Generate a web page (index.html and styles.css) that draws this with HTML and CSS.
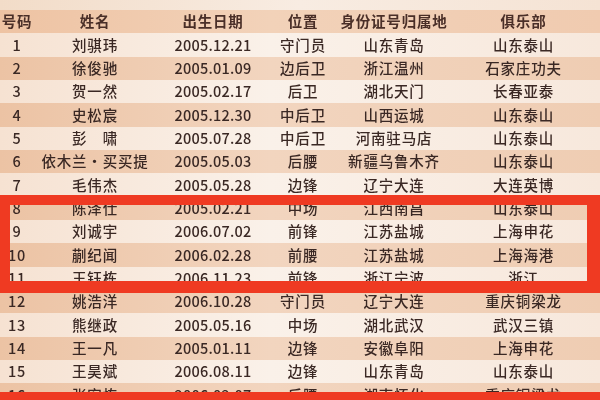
FILE: index.html
```html
<!DOCTYPE html>
<html lang="zh-CN">
<head>
<meta charset="utf-8">
<title>球员名单</title>
<link rel="stylesheet" href="styles.css">
</head>
<body>
<div class="page">
  <div class="table">
    <div class="row head"><span>号码</span><span>姓名</span><span>出生日期</span><span>位置</span><span>身份证号归属地</span><span>俱乐部</span></div>
    <div class="row light"><span>1</span><span>刘骐玮</span><span>2005.12.21</span><span>守门员</span><span>山东青岛</span><span>山东泰山</span></div>
    <div class="row dark"><span>2</span><span>徐俊驰</span><span>2005.01.09</span><span>边后卫</span><span>浙江温州</span><span>石家庄功夫</span></div>
    <div class="row light"><span>3</span><span>贺一然</span><span>2005.02.17</span><span>后卫</span><span>湖北天门</span><span>长春亚泰</span></div>
    <div class="row dark"><span>4</span><span>史松宸</span><span>2005.12.30</span><span>中后卫</span><span>山西运城</span><span>山东泰山</span></div>
    <div class="row light"><span>5</span><span>彭　啸</span><span>2005.07.28</span><span>中后卫</span><span>河南驻马店</span><span>山东泰山</span></div>
    <div class="row dark"><span>6</span><span>依木兰·买买提</span><span>2005.05.03</span><span>后腰</span><span>新疆乌鲁木齐</span><span>山东泰山</span></div>
    <div class="row light"><span>7</span><span>毛伟杰</span><span>2005.05.28</span><span>边锋</span><span>辽宁大连</span><span>大连英博</span></div>
    <div class="row dark"><span>8</span><span>陈泽仕</span><span>2005.02.21</span><span>中场</span><span>江西南昌</span><span>山东泰山</span></div>
    <div class="row light"><span>9</span><span>刘诚宇</span><span>2006.07.02</span><span>前锋</span><span>江苏盐城</span><span>上海申花</span></div>
    <div class="row dark"><span>10</span><span>蒯纪闻</span><span>2006.02.28</span><span>前腰</span><span>江苏盐城</span><span>上海海港</span></div>
    <div class="row light"><span>11</span><span>王钰栋</span><span>2006.11.23</span><span>前锋</span><span>浙江宁波</span><span>浙江</span></div>
    <div class="row dark"><span>12</span><span>姚浩洋</span><span>2006.10.28</span><span>守门员</span><span>辽宁大连</span><span>重庆铜梁龙</span></div>
    <div class="row light"><span>13</span><span>熊继政</span><span>2005.05.16</span><span>中场</span><span>湖北武汉</span><span>武汉三镇</span></div>
    <div class="row dark"><span>14</span><span>王一凡</span><span>2005.01.11</span><span>边锋</span><span>安徽阜阳</span><span>上海申花</span></div>
    <div class="row light"><span>15</span><span>王昊斌</span><span>2006.08.11</span><span>边锋</span><span>山东青岛</span><span>山东泰山</span></div>
    <div class="row dark"><span>16</span><span>张宏栋</span><span>2006.02.07</span><span>后腰</span><span>湖南怀化</span><span>重庆铜梁龙</span></div>
  </div>
  <div class="frame"></div>
  <div class="band"></div>
</div>
</body>
</html>
```

FILE: styles.css
```css
html, body {
  margin: 0;
  padding: 0;
  background: #f6e6d8;
}
.page {
  position: relative;
  width: 600px;
  height: 400px;
  overflow: hidden;
  background: linear-gradient(90deg, #f2dcc8, #f8ece2 50%, #f5e3d4);
  font-family: "Noto Sans CJK SC", "Noto Sans", sans-serif;
  font-weight: 500;
  font-size: 14.5px;
  letter-spacing: 0.8px;
  color: #3a2824;
}
.table {
  padding-top: 10px;
  filter: blur(0.35px);
}
.row {
  display: grid;
  grid-template-columns: 34px 122px 114px 66px 116px 143px;
  height: 23.33px;
  align-items: center;
  text-align: center;
  line-height: 1;
}
.row span {
  white-space: nowrap;
}
.row span:nth-child(3) {
  letter-spacing: 0.2px;
}
.head span:nth-child(3) {
  letter-spacing: 0.8px;
}
.head {
  background: linear-gradient(90deg, #eec3a3, #f2d2b9 45%, #f0cbb0);
  color: #4a2f28;
  font-weight: 700;
}
.dark {
  background: linear-gradient(90deg, #ecc3a4, #f2d5bf 45%, #efcdb3);
}
.light {
  background: linear-gradient(90deg, #f6e2d2, #faf1e9 45%, #f7e8dc);
}
.frame {
  position: absolute;
  left: 0;
  top: 195px;
  width: 600px;
  height: 98px;
  box-sizing: border-box;
  border-style: solid;
  border-color: #ef3a22;
  border-width: 10px 13px 12px 10px;
}
.band {
  position: absolute;
  left: 0;
  top: 392px;
  width: 600px;
  height: 8px;
  background: #ef3a22;
}
```
